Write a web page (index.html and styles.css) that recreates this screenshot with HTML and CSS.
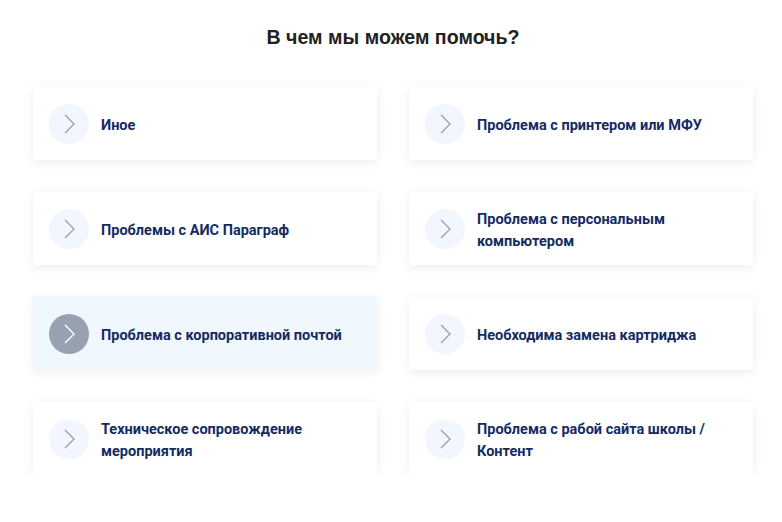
FILE: index.html
```html
<!DOCTYPE html>
<html lang="ru">
<head>
    <meta charset="UTF-8">
    <meta name="viewport" content="width=device-width, initial-scale=1.0">
    <title>В чем мы можем помочь?</title>
    <link rel="stylesheet" href="styles.css">
</head>
<body>
    <section class="help">
        <h1 class="help-title">В чем мы можем помочь?</h1>
        <div class="topics">
            <a class="topic" href="#">
                <span class="arrow"><svg viewBox="0 0 40 40"><path d="M16 11 L25 20 L16 29"/></svg></span>
                <span class="label">Иное</span>
            </a>
            <a class="topic" href="#">
                <span class="arrow"><svg viewBox="0 0 40 40"><path d="M16 11 L25 20 L16 29"/></svg></span>
                <span class="label">Проблема с принтером или МФУ</span>
            </a>
            <a class="topic" href="#">
                <span class="arrow"><svg viewBox="0 0 40 40"><path d="M16 11 L25 20 L16 29"/></svg></span>
                <span class="label">Проблемы с АИС Параграф</span>
            </a>
            <a class="topic" href="#">
                <span class="arrow"><svg viewBox="0 0 40 40"><path d="M16 11 L25 20 L16 29"/></svg></span>
                <span class="label">Проблема с персональным компьютером</span>
            </a>
            <a class="topic active" href="#">
                <span class="arrow"><svg viewBox="0 0 40 40"><path d="M16 11 L25 20 L16 29"/></svg></span>
                <span class="label">Проблема с корпоративной почтой</span>
            </a>
            <a class="topic" href="#">
                <span class="arrow"><svg viewBox="0 0 40 40"><path d="M16 11 L25 20 L16 29"/></svg></span>
                <span class="label">Необходима замена картриджа</span>
            </a>
            <a class="topic" href="#">
                <span class="arrow"><svg viewBox="0 0 40 40"><path d="M16 11 L25 20 L16 29"/></svg></span>
                <span class="label">Техническое сопровождение мероприятия</span>
            </a>
            <a class="topic" href="#">
                <span class="arrow"><svg viewBox="0 0 40 40"><path d="M16 11 L25 20 L16 29"/></svg></span>
                <span class="label">Проблема с рабой сайта школы / Контент</span>
            </a>
        </div>
    </section>
</body>
</html>
```

FILE: styles.css
```css
*{
    margin: 0;
    padding: 0;
    box-sizing: border-box;
}
body{
    background: #fff;
    font-family: Roboto, "Liberation Sans", sans-serif;
}
.help{
    width: 720px;
    margin-left: 33px;
    padding-top: 25px;
}
.help-title{
    font-family: "Liberation Sans", Arial, sans-serif;
    font-size: 19.6px;
    font-weight: bold;
    color: #222;
    text-align: center;
    line-height: 24px;
    margin-bottom: 38px;
}
.topics{
    display: grid;
    grid-template-columns: repeat(2, 1fr);
    column-gap: 32px;
    row-gap: 32px;
}
.topic{
    display: flex;
    align-items: center;
    gap: 12px;
    height: 73px;
    padding: 0 16px;
    background: #fff;
    box-shadow: 0 2px 10px rgba(0, 0, 0, .08);
    text-decoration: none;
}
.topic.active{
    background: #f0f8fe;
}
.arrow{
    flex: none;
    width: 40px;
    height: 40px;
    border-radius: 50%;
    background: #f2f6fe;
}
.arrow svg{
    display: block;
    width: 40px;
    height: 40px;
    fill: none;
    stroke: #9ba1b3;
    stroke-width: 1.4;
}
.topic.active .arrow{
    background: #98a1b2;
}
.topic.active .arrow svg{
    stroke: #fff;
}
.label{
    font-size: 14.5px;
    font-weight: bold;
    line-height: 22px;
    padding-top: 4px;
    color: #142b62;
}
```
